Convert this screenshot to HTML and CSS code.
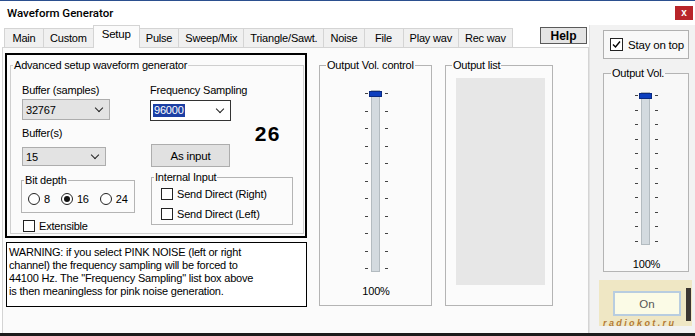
FILE: index.html
```html
<!DOCTYPE html>
<html lang="en">
<head>
<meta charset="UTF-8">
<title>Waveform Generator</title>
<link rel="stylesheet" href="styles.css">
</head>
<body>

<div class="window">
  <div class="titlebar">
    <span class="title">Waveform Generator</span>
    <span class="close">x</span>
  </div>

  <div class="body">
    <div class="main">
      <!-- tab strip -->
      <div class="tabs">
        <span class="tab">Main</span>
        <span class="tab">Custom</span>
        <span class="tab active">Setup</span>
        <span class="tab">Pulse</span>
        <span class="tab">Sweep/Mix</span>
        <span class="tab">Triangle/Sawt.</span>
        <span class="tab">Noise</span>
        <span class="tab">File</span>
        <span class="tab">Play wav</span>
        <span class="tab">Rec wav</span>
        <button class="help" type="button">Help</button>
      </div>

      <div class="panel">
        <div class="left-col">
          <div class="advanced">
            <fieldset class="group adv-group">
              <legend>Advanced setup waveform generator</legend>
              <div class="adv-cols">
                <div class="col-a">
                  <div class="label">Buffer (samples)</div>
                  <div class="select select-gray select-buffer"><span>32767</span><span class="chev"></span></div>
                  <div class="label label-bufs">Buffer(s)</div>
                  <div class="select select-gray select-count"><span>15</span><span class="chev"></span></div>

                  <fieldset class="group bit-group">
                    <legend>Bit depth</legend>
                    <div class="radios">
                      <span class="radio-item"><span class="radio"></span>8</span>
                      <span class="radio-item"><span class="radio on"></span>16</span>
                      <span class="radio-item"><span class="radio"></span>24</span>
                    </div>
                  </fieldset>

                  <div class="check-row extensible"><span class="check"></span>Extensible</div>
                </div>

                <div class="col-b">
                  <div class="label">Frequency Sampling</div>
                  <div class="select select-freq"><span class="sel-text">96000</span><span class="chev"></span></div>
                  <div class="big-num">26</div>
                  <button class="btn as-input" type="button">As input</button>

                  <fieldset class="group input-group">
                    <legend>Internal Input</legend>
                    <div class="check-row"><span class="check"></span>Send Direct (Right)</div>
                    <div class="check-row second"><span class="check"></span>Send Direct (Left)</div>
                  </fieldset>
                </div>
              </div>
            </fieldset>
          </div>

          <div class="warning">
            WARNING: if you select PINK NOISE (left or right<br>
            channel) the frequency sampling will be forced to<br>
            44100 Hz. The "Frequency Sampling" list box above<br>
            is then meaningless for pink noise generation.
          </div>
        </div>

        <fieldset class="group vol-group">
          <legend>Output Vol. control</legend>
          <div class="slider slider-tall">
            <div class="ticks"><i></i><i></i><i></i><i></i><i></i><i></i><i></i><i></i><i></i><i></i><i></i></div>
            <div class="track"><span class="thumb"></span></div>
            <div class="ticks"><i></i><i></i><i></i><i></i><i></i><i></i><i></i><i></i><i></i><i></i><i></i></div>
          </div>
          <div class="pct">100%</div>
        </fieldset>

        <fieldset class="group list-group">
          <legend>Output list</legend>
          <div class="list-box"></div>
        </fieldset>
      </div>
    </div>

    <!-- right column -->
    <div class="side">
      <div class="stay-box">
        <span class="check checked">
          <svg width="11" height="11" viewBox="0 0 11 11"><polyline points="2,5.5 4.5,8 9,2.5" fill="none" stroke="#000" stroke-width="1.4"/></svg>
        </span>
        Stay on top
      </div>

      <fieldset class="group side-vol">
        <legend>Output Vol.</legend>
        <div class="slider slider-short">
          <div class="ticks"><i></i><i></i><i></i><i></i><i></i><i></i><i></i><i></i><i></i><i></i><i></i></div>
          <div class="track"><span class="thumb"></span></div>
          <div class="ticks"><i></i><i></i><i></i><i></i><i></i><i></i><i></i><i></i><i></i><i></i><i></i></div>
        </div>
        <div class="pct">100%</div>
      </fieldset>

      <div class="on-area">
        <div class="on-row">
          <button class="on-btn" type="button">On</button>
          <span class="dark-bar"></span>
        </div>
        <div class="mark">radiokot.ru</div>
      </div>
    </div>
  </div>
</div>

</body>
</html>
```

FILE: styles.css
```css
* {
  box-sizing: border-box;
}
body {
  margin: 0;
  font-family: "Liberation Sans", Arial, sans-serif;
  font-size: 11px;
  letter-spacing: -0.2px;
  color: #000;
  background: #fff;
}
.window {
  width: 695px;
  height: 336px;
  display: flex;
  flex-direction: column;
  border-top: 1px solid #2b4f8f;
  border-bottom: 3px solid #1c1c1c;
  background: #f2f2f2;
  overflow: hidden;
}

/* title bar */
.titlebar {
  height: 24px;
  flex: none;
  background: #fff;
  display: flex;
  align-items: center;
  justify-content: space-between;
  padding: 0 2px 0 7px;
}
.title {
  font-family: Roboto, "Liberation Sans", sans-serif;
  font-weight: 500;
  font-size: 11.5px;
  letter-spacing: 0;
}
.close {
  width: 18px;
  height: 14px;
  background: #b8252a;
  color: #fff;
  font-weight: bold;
  font-size: 10px;
  line-height: 13px;
  text-align: center;
}

.body {
  flex: 1;
  display: flex;
  min-height: 0;
}
.main {
  width: 589px;
  display: flex;
  flex-direction: column;
  background: #fff;
}

/* tabs */
.tabs {
  height: 22px;
  display: flex;
  align-items: flex-end;
  padding-left: 4px;
  position: relative;
  z-index: 1;
}
.tab {
  min-width: 40px;
  height: 19px;
  padding: 0 6px;
  margin-right: -1px;
  border: 1px solid #d4d4d4;
  border-bottom: none;
  background: #f0f0f0;
  line-height: 18px;
  text-align: center;
}
.tab.active {
  height: 23px;
  margin-bottom: -1px;
  padding: 0 8px;
  background: #fbfbfb;
  line-height: 17px;
  font-size: 11.5px;
  position: relative;
}
.help {
  margin: 0 2px 3px auto;
  align-self: flex-end;
  width: 47px;
  height: 17px;
  padding: 0;
  border: 1px solid #5a5a5a;
  background: #e4e4e4;
  font-family: "Liberation Sans", Arial, sans-serif;
  font-weight: bold;
  font-size: 12px;
  letter-spacing: 0;
}

/* tab page */
.panel {
  flex: 1;
  margin-left: 2px;
  border: 1px solid #d4d4d4;
  border-bottom: none;
  background: #fbfbfb;
  display: flex;
  align-items: flex-start;
  padding: 5px 0 0 2px;
}
.left-col {
  width: 302px;
}
.advanced {
  height: 185px;
  border: 2px solid #000;
}
.warning {
  margin: 4px 0 0 1px;
  width: 301px;
  height: 65px;
  border: 1px solid #000;
  background: #fff;
  padding: 3px 2px;
  line-height: 13px;
  font-size: 11px;
  letter-spacing: -0.2px;
}

/* group boxes */
.group {
  margin: 0;
  padding: 0;
  min-width: 0;
  border: 1px solid #b4b4b4;
}
.group legend {
  margin-left: 6px;
  padding: 0 1px;
  line-height: 14px;
}
.adv-group {
  margin: 3px 0 0 3px;
  width: 294px;
  height: 176px;
  border-color: #cfcfcf;
}
.adv-group legend {
  margin-left: 2px;
}
.adv-cols {
  display: flex;
  padding: 11px 0 0 11px;
}
.col-a {
  width: 114px;
}
.col-b {
  width: 143px;
  margin-left: 14px;
}
.label {
  line-height: 14px;
}
.label-bufs {
  margin-top: 6px;
}

/* combo boxes */
.select {
  display: flex;
  align-items: center;
  justify-content: space-between;
  border: 1px solid #adadad;
  padding: 0 7px 0 3px;
}
.select-gray {
  background: #e3e3e3;
}
.select-buffer {
  margin-top: 2px;
  width: 88px;
  height: 21px;
}
.select-count {
  margin-top: 7px;
  width: 84px;
  height: 19px;
}
.select-freq {
  margin-top: 3px;
  width: 81px;
  height: 21px;
  background: #fff;
  border-color: #333;
  padding-left: 2px;
}
.sel-text {
  background: #1c3fa4;
  color: #fff;
  padding: 0 1px;
  line-height: 13px;
}
.chev {
  width: 6px;
  height: 6px;
  border-right: 1.5px solid #222;
  border-bottom: 1.5px solid #222;
  transform: rotate(45deg);
  margin-top: -4px;
}

.big-num {
  height: 23px;
  text-align: right;
  padding-right: 12px;
  font-weight: bold;
  font-size: 21px;
  letter-spacing: 1.5px;
  line-height: 25px;
}
.btn {
  display: block;
  margin-left: 1px;
  width: 79px;
  height: 23px;
  padding: 0;
  border: 1px solid #adadad;
  background: #e1e1e1;
  font-family: "Liberation Sans", Arial, sans-serif;
  font-size: 11.5px;
  letter-spacing: -0.2px;
}

.bit-group {
  margin: 7px 0 0 -1px;
  width: 114px;
  height: 40px;
}
.radios {
  display: flex;
  padding: 5px 0 0 6px;
  line-height: 14px;
}
.radio-item {
  display: flex;
  align-items: center;
  margin-right: 11px;
}
.radio {
  width: 12px;
  height: 12px;
  border: 1px solid #222;
  border-radius: 50%;
  background: #fff;
  margin-right: 4px;
  display: flex;
  align-items: center;
  justify-content: center;
}
.radio.on::after {
  content: "";
  width: 6px;
  height: 6px;
  border-radius: 50%;
  background: #111;
}

.check-row {
  display: flex;
  align-items: center;
  line-height: 14px;
}
.check {
  width: 12px;
  height: 12px;
  border: 1px solid #222;
  background: #fff;
  margin-right: 4px;
  flex: none;
}
.extensible {
  margin: 6px 0 0 1px;
}

.input-group {
  margin: 3px 0 0 1px;
  width: 142px;
  height: 55px;
}
.input-group .check-row {
  margin: 3px 0 0 9px;
}
.input-group .check-row.second {
  margin-top: 6px;
}

/* output volume */
.vol-group {
  margin: 5px 0 0 12px;
  width: 113px;
  height: 248px;
}
.slider {
  display: flex;
  justify-content: center;
  margin-top: 18px;
}
.slider-tall {
  height: 182px;
  padding-left: 1px;
}
.slider-short {
  height: 153px;
  margin-top: 12px;
}
.ticks {
  width: 3px;
  display: flex;
  flex-direction: column;
  justify-content: space-between;
  margin: 3px 0;
}
.ticks i {
  display: block;
  height: 1px;
  background: #444;
}
.track {
  width: 9px;
  margin: 0 5px 0 3px;
  background: #d3dadf;
  border: 1px solid #b3bbc0;
  position: relative;
}
.thumb {
  position: absolute;
  top: 0;
  left: -3px;
  width: 13px;
  height: 6px;
  background: #0d3fbe;
  border: 1px solid #0a2a80;
}
.pct {
  text-align: center;
  margin-top: 12px;
  line-height: 14px;
  padding-left: 1px;
}

.list-group {
  margin: 5px 0 0 13px;
  width: 108px;
  height: 248px;
}
.list-box {
  margin: 6px 0 0 10px;
  width: 89px;
  height: 207px;
  background: #e7e7e7;
}

/* right column */
.side {
  flex: 1;
  padding-left: 13px;
  border-left: 1px solid #e2e2e2;
}
.stay-box {
  margin-top: 5px;
  width: 86px;
  height: 29px;
  border: 1px solid #b0b0b0;
  background: #f8f8f8;
  display: flex;
  align-items: center;
  padding-left: 6px;
  font-size: 11.5px;
}
.check.checked {
  width: 13px;
  height: 13px;
  margin-right: 5px;
  display: flex;
  align-items: center;
  justify-content: center;
}
.side-vol {
  margin-top: 7px;
  width: 86px;
  height: 206px;
  background: #f8f8f8;
}
.side-vol legend {
  margin-left: 7px;
}

.on-area {
  margin: 8px 0 0 -4px;
  width: 93px;
  height: 46px;
  background: #efe7c4;
  padding: 11px 0 0 14px;
}
.on-row {
  display: flex;
  align-items: flex-start;
}
.on-btn {
  width: 68px;
  height: 25px;
  padding: 0;
  border: 2px solid #b8cde0;
  background: #fbfbe6;
  color: #555;
  font-family: "Liberation Sans", Arial, sans-serif;
  font-size: 11.5px;
}
.dark-bar {
  width: 5px;
  height: 33px;
  margin: -3px 0 0 5px;
  background: #3b3631;
}
.mark {
  margin: -2px 0 0 -10px;
  font-size: 9px;
  font-weight: bold;
  font-style: italic;
  letter-spacing: 2.4px;
  color: #b37a34;
  line-height: 9px;
}
```
